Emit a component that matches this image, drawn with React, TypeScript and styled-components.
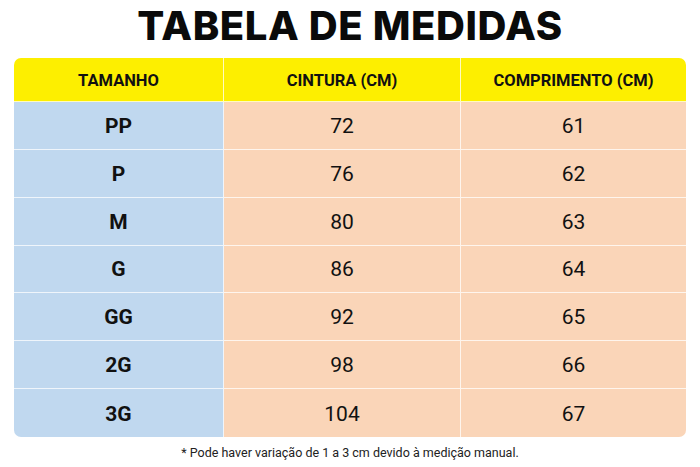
import styled, { createGlobalStyle } from 'styled-components';

const GlobalStyle = createGlobalStyle`
  html, body {
    margin: 0;
    padding: 0;
    background: #ffffff;
  }
  body {
    font-family: Roboto, "Noto Sans", sans-serif;
    color: #111;
  }
`;

const Page = styled.div`
  width: 700px;
  height: 467px;
  display: flex;
  flex-direction: column;
  align-items: center;
  box-sizing: border-box;
  padding: 0 14px;
`;

const Title = styled.h1`
  margin: 0;
  height: 58px;
  display: flex;
  align-items: center;
  font-family: Inter, Roboto, sans-serif;
  font-weight: 800;
  font-size: 40px;
  letter-spacing: 0.6px;
  color: #0a0a0a;
  line-height: 1;
  padding-bottom: 6px;
  box-sizing: border-box;
`;

const Table = styled.div`
  width: 672px;
  display: grid;
  grid-template-columns: 210px 237px 225px;
  grid-template-rows: 44px repeat(7, 1fr);
  height: 379px;
  border-radius: 7px;
  overflow: hidden;
`;

type Kind = 'head' | 'size' | 'value';

const Cell = styled.div<{ $kind: Kind; $last?: boolean; $bottom?: boolean }>`
  display: flex;
  align-items: center;
  justify-content: center;
  box-sizing: border-box;
  border-right: ${(p) => (p.$last ? 'none' : '1.5px solid rgba(255,255,255,0.75)')};
  border-bottom: ${(p) => (p.$bottom ? 'none' : '1.5px solid rgba(255,255,255,0.75)')};
  background: ${(p) => (p.$kind === 'head' ? '#fdef00' : p.$kind === 'size' ? '#c0d8ef' : '#fad5b8')};
  font-family: Roboto, "Noto Sans", sans-serif;
  font-size: ${(p) => (p.$kind === 'head' ? '16.5px' : '21px')};
  font-weight: ${(p) => (p.$kind === 'value' ? 400 : 700)};
  color: #111;
  padding-top: 1px;
`;

const Note = styled.p`
  margin: 8px 0 0;
  font-family: Roboto, "Noto Sans", sans-serif;
  font-size: 12.5px;
  color: #222;
`;

const rows: [string, string, string][] = [
  ['PP', '72', '61'],
  ['P', '76', '62'],
  ['M', '80', '63'],
  ['G', '86', '64'],
  ['GG', '92', '65'],
  ['2G', '98', '66'],
  ['3G', '104', '67'],
];

export default function App() {
  return (
    <>
      <GlobalStyle />
      <Page>
        <Title>TABELA DE MEDIDAS</Title>
        <Table>
          <Cell $kind="head">TAMANHO</Cell>
          <Cell $kind="head">CINTURA (CM)</Cell>
          <Cell $kind="head" $last>COMPRIMENTO (CM)</Cell>
          {rows.map(([size, waist, length], i) => {
            const bottom = i === rows.length - 1;
            return [
              <Cell key={`${size}-s`} $kind="size" $bottom={bottom}>{size}</Cell>,
              <Cell key={`${size}-w`} $kind="value" $bottom={bottom}>{waist}</Cell>,
              <Cell key={`${size}-l`} $kind="value" $last $bottom={bottom}>{length}</Cell>,
            ];
          })}
        </Table>
        <Note>* Pode haver variação de 1 a 3 cm devido à medição manual.</Note>
      </Page>
    </>
  );
}
